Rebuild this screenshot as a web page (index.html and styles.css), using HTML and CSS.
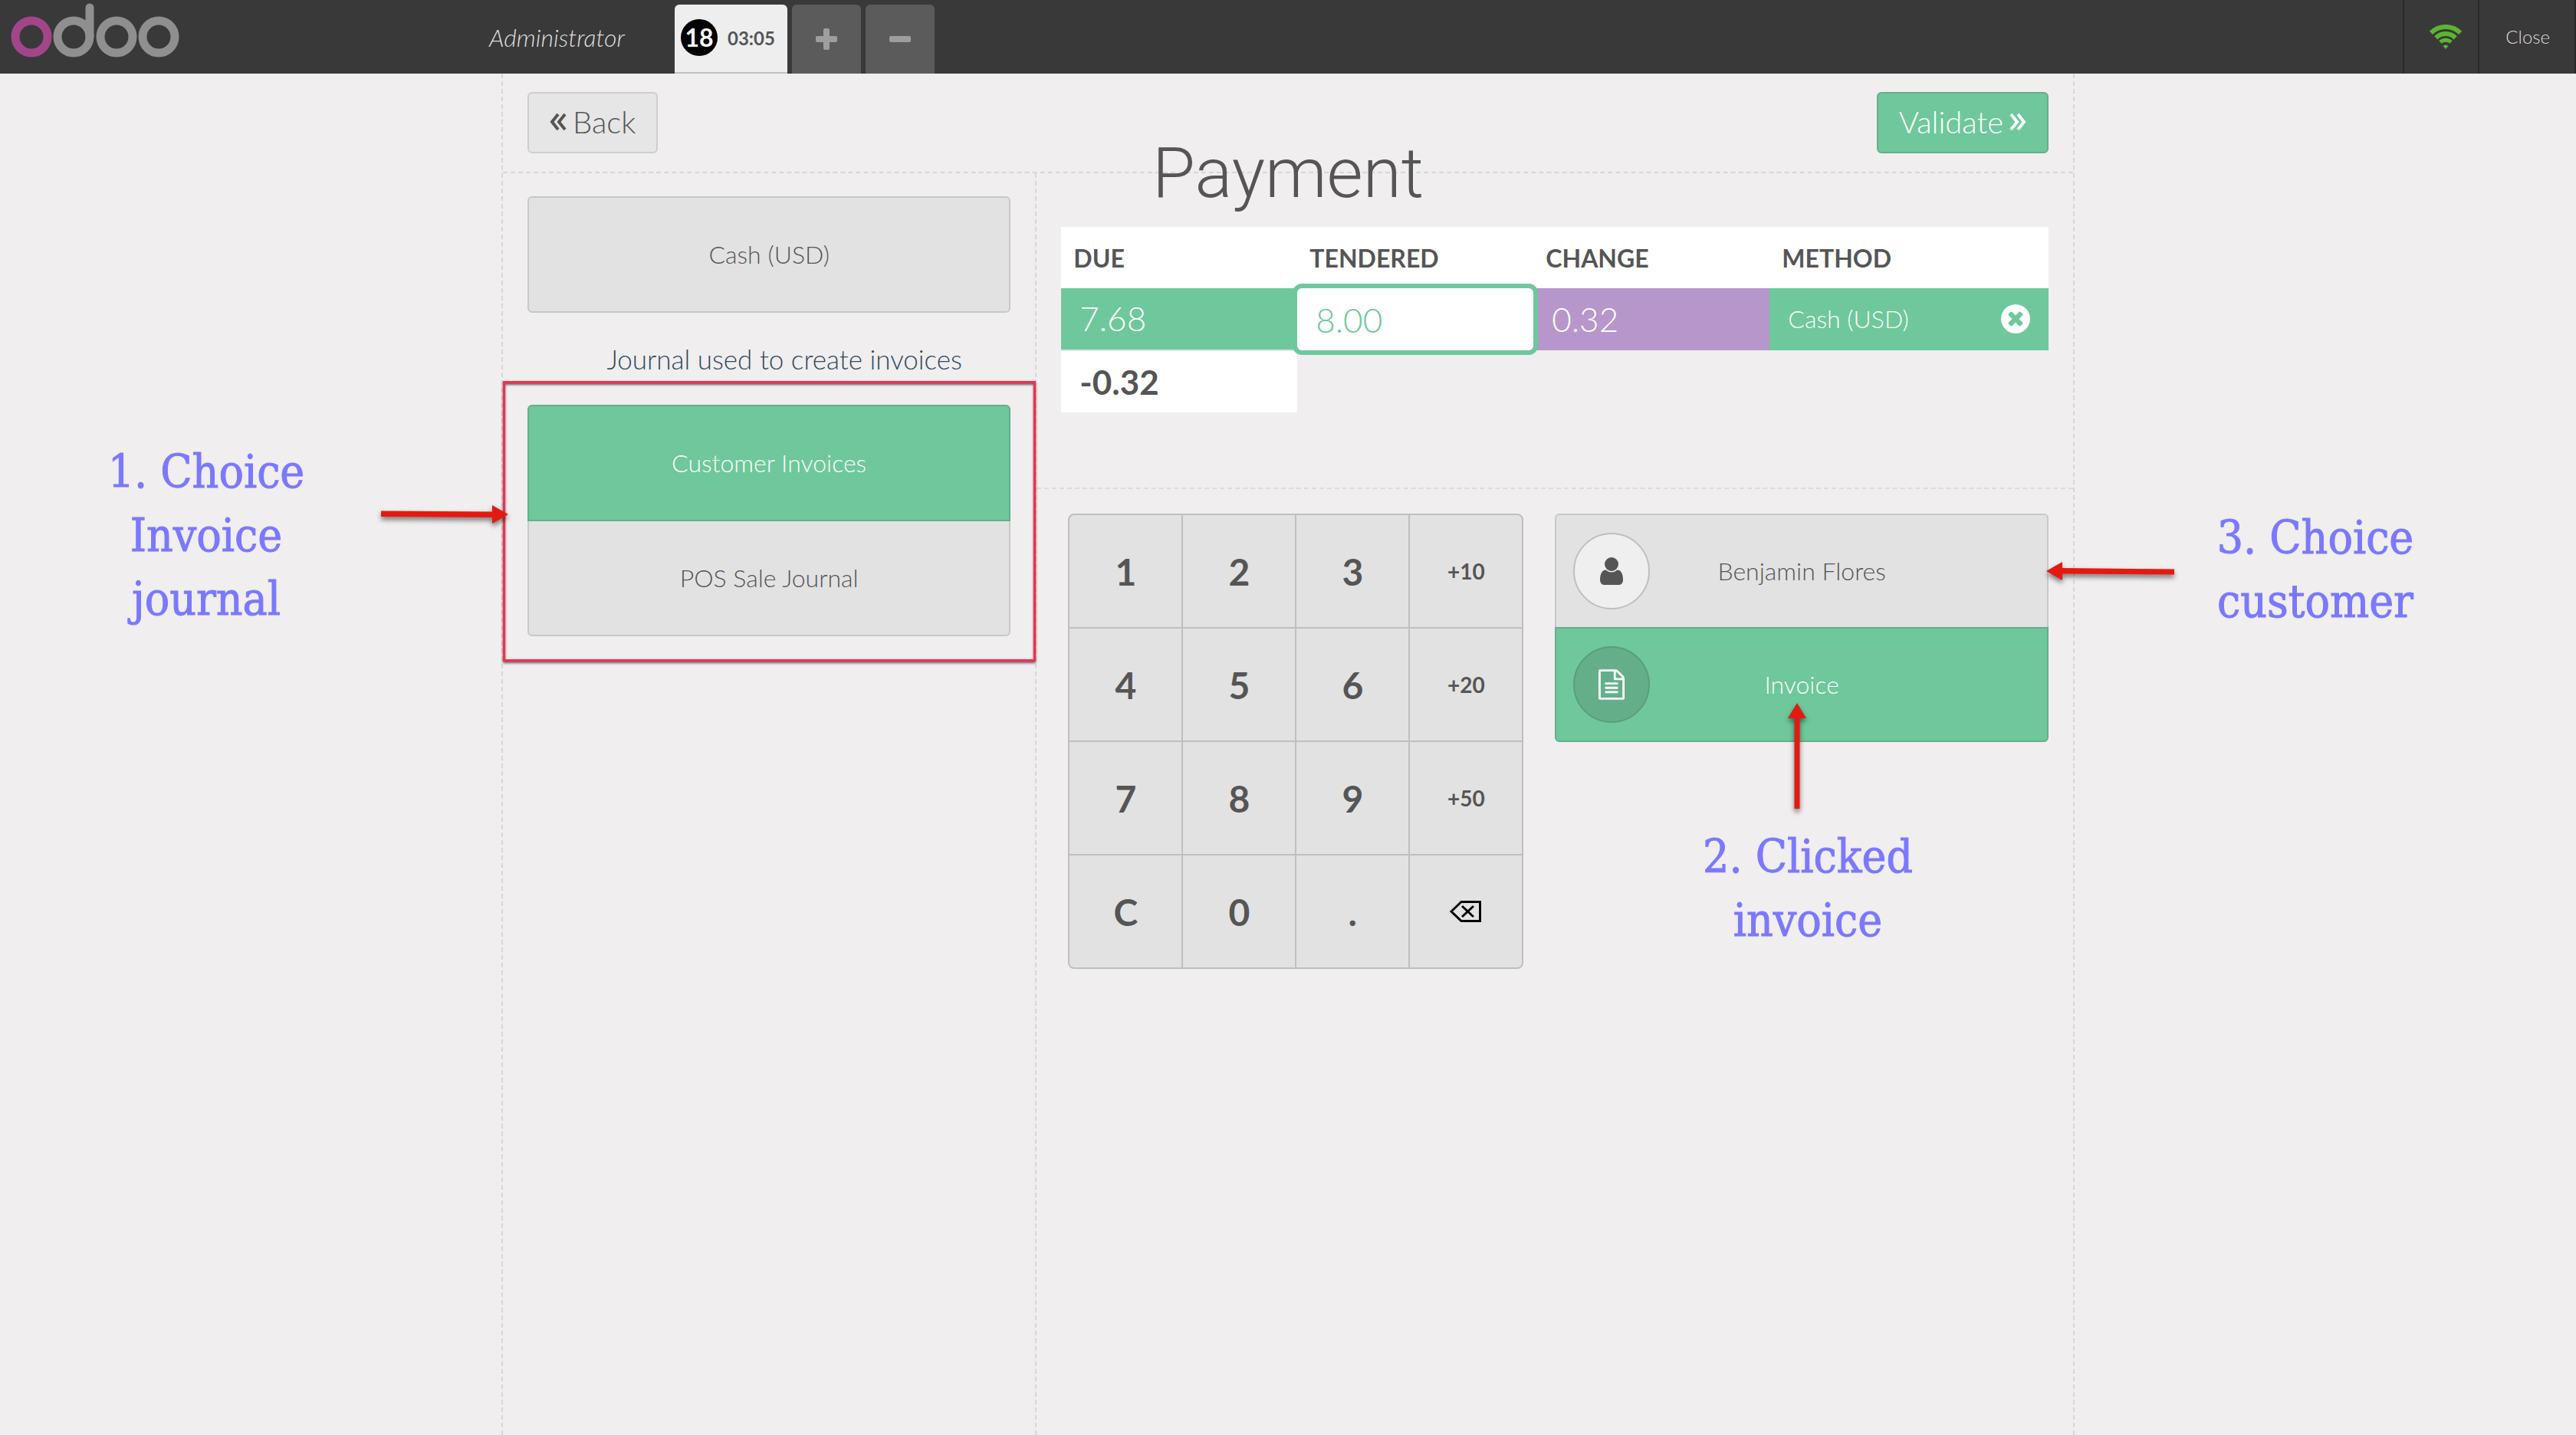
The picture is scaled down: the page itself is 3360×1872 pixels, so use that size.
FILE: index.html
```html
<!DOCTYPE html>
<html lang="en">
<head>
<meta charset="utf-8">
<meta name="viewport" content="width=device-width, initial-scale=1">
<title>Point of Sale - Payment</title>
<link rel="stylesheet" href="styles.css">
</head>
<body>
<header class="topbar">
  <div class="branding">
    <svg class="logo" viewBox="0 0 220 72" role="img" aria-label="odoo">
      <g fill="none" stroke-width="11">
        <circle cx="27" cy="44" r="21" stroke="#a24689"/>
        <g stroke="#8f8f8f">
          <circle cx="82" cy="44" r="21"/>
          <path d="M103 44V6" stroke-linecap="round"/>
          <circle cx="138" cy="44" r="21"/>
          <circle cx="193" cy="44" r="21"/>
        </g>
      </g>
    </svg>
    <span class="username">Administrator</span>
  </div>
  <nav class="orders">
    <button type="button" class="order selected"><span class="sequence">18</span><span class="time">03:05</span></button>
    <button type="button" class="order square" aria-label="New order">
      <svg viewBox="0 0 28 28" width="28" height="28"><rect x="10" width="8" height="28" rx="2"/><rect y="10" width="28" height="8" rx="2"/></svg>
    </button>
    <button type="button" class="order square" aria-label="Delete order">
      <svg viewBox="0 0 28 28" width="28" height="28"><rect y="10" width="28" height="8" rx="2"/></svg>
    </button>
  </nav>
  <div class="status">
    <div class="status-item wifi">
      <svg viewBox="0 0 44 32" width="44" height="32" role="img" aria-label="Connected">
        <g fill="none" stroke="#5cb531" stroke-width="6">
          <path d="M2.9 10.9A27 27 0 0 1 41.1 10.9"/>
          <path d="M9.3 17.3A18 18 0 0 1 34.7 17.3"/>
          <path d="M15 23A10 10 0 0 1 29 23" stroke-width="5"/>
        </g>
        <path d="M18.500 28Q22 25 25.500 28L22 32Z" fill="#5cb531"/>
      </svg>
    </div>
    <button type="button" class="status-item close">Close</button>
  </div>
</header>

<main class="screen">
  <div class="top-content">
    <button type="button" class="nav-button">
      <svg viewBox="0 0 22 24" width="22" height="24"><path d="M11 2L3 12L11 22M20 2L12 12L20 22"/></svg>
      Back
    </button>
    <h1 class="title">Payment</h1>
    <button type="button" class="nav-button highlight">
      Validate
      <svg viewBox="0 0 22 24" width="22" height="24"><path d="M2 2L10 12L2 22M11 2L19 12L11 22"/></svg>
    </button>
  </div>

  <div class="columns">
    <section class="left-content">
      <div class="button-group">
        <button type="button" class="choice">Cash (USD)</button>
      </div>
      <p class="journal-caption">Journal used to create invoices</p>
      <div class="button-group journals">
        <button type="button" class="choice highlight">Customer Invoices</button>
        <button type="button" class="choice">POS Sale Journal</button>
        <div class="frame"></div>
      </div>
    </section>

    <section class="right-content">
      <div class="paymentlines-container">
        <table class="paymentlines">
          <thead>
            <tr><th>DUE</th><th>TENDERED</th><th>CHANGE</th><th>METHOD</th></tr>
          </thead>
          <tbody>
            <tr class="line">
              <td class="due">7.68</td>
              <td class="tendered"><input type="text" value="8.00" aria-label="Tendered"></td>
              <td class="change">0.32</td>
              <td class="method">
                <div class="method-row">
                  <span>Cash (USD)</span>
                  <button type="button" class="delete" aria-label="Remove payment line">
                    <svg viewBox="128 128 1536 1536" width="38" height="38"><path d="M1277 1122q0-26-19-45l-181-181 181-181q19-19 19-45 0-27-19-46l-90-90q-19-19-46-19-26 0-45 19l-181 181-181-181q-19-19-45-19-27 0-46 19l-90 90q-19 19-19 46 0 26 19 45l181 181-181 181q-19 19-19 45 0 27 19 46l90 90q19 19 46 19 26 0 45-19l181-181 181 181q19 19 45 19 27 0 46-19l90-90q19-19 19-46zm387-226q0 209-103 385.500t-279.500 279.500-385.500 103-385.500-103-279.500-279.500-103-385.500 103-385.500 279.500-279.500 385.500-103 385.500 103 279.500 279.500 103 385.500z"/></svg>
                  </button>
                </div>
              </td>
            </tr>
            <tr class="remaining"><td>-0.32</td></tr>
          </tbody>
        </table>
      </div>

      <div class="bottom-content">
        <div class="numpad">
          <button type="button">1</button><button type="button">2</button><button type="button">3</button><button type="button" class="mode">+10</button>
          <button type="button">4</button><button type="button">5</button><button type="button">6</button><button type="button" class="mode">+20</button>
          <button type="button">7</button><button type="button">8</button><button type="button">9</button><button type="button" class="mode">+50</button>
          <button type="button">C</button><button type="button">0</button><button type="button">.</button>
          <button type="button" aria-label="Backspace">
            <svg viewBox="0 0 42 28" width="42" height="28" fill="none" stroke="#000"><path d="M2 14L15 1.500H39.500V26.500H15Z" stroke-width="3"/><path d="M16 7L31 21M31 7L16 21" stroke-width="3"/></svg>
          </button>
        </div>
        <div class="button-group payment-buttons">
          <button type="button" class="option">
            <span class="icon"><svg viewBox="0 128 1280 1536" width="30" height="36"><path d="M1280 1399q0 109-62.500 187t-150.500 78h-854q-88 0-150.500-78t-62.500-187q0-85 8.500-160.500t31.500-152 58.500-131 94-89 134.500-34.500q131 128 313 128t313-128q76 0 134.500 34.500t94 89 58.500 131 31.500 152 8.500 160.500zm-256-887q0 159-112.500 271.500t-271.500 112.500-271.500-112.500-112.500-271.500 112.500-271.500 271.500-112.500 271.500 112.500 112.500 271.500z"/></svg></span>
            Benjamin Flores
          </button>
          <button type="button" class="option highlight">
            <span class="icon"><svg viewBox="128 0 1536 1792" width="34" height="40"><path d="M1596 380q28 28 48 76t20 88v1152q0 40-28 68t-68 28h-1344q-40 0-68-28t-28-68v-1600q0-40 28-68t68-28h896q40 0 88 20t76 48zm-444-244v376h376q-10-29-22-41l-313-313q-12-12-41-22zm384 1528v-1024h-416q-40 0-68-28t-28-68v-416h-768v1536h1280zm-1024-864q0-14 9-23t23-9h704q14 0 23 9t9 23v64q0 14-9 23t-23 9h-704q-14 0-23-9t-9-23v-64zm736 224q14 0 23 9t9 23v64q0 14-9 23t-23 9h-704q-14 0-23-9t-9-23v-64q0-14 9-23t23-9h704zm0 256q14 0 23 9t9 23v64q0 14-9 23t-23 9h-704q-14 0-23-9t-9-23v-64q0-14 9-23t23-9h704z"/></svg></span>
            Invoice
          </button>
        </div>
      </div>
    </section>
  </div>

  <!-- Walkthrough callouts laid over the screen -->
  <p class="note note-journal">1. Choice<br>Invoice<br>journal</p>
  <p class="note note-invoice">2. Clicked<br>invoice</p>
  <p class="note note-customer">3. Choice<br>customer</p>
  <svg class="arrow arrow-journal" viewBox="0 0 166 24" width="166" height="24"><path d="M0 7.500L145 8.500V0L166 12L145 24V16L0 15Z"/></svg>
  <svg class="arrow arrow-invoice" viewBox="0 0 24 138" width="24" height="138"><path d="M12 0L24 20H15.500V138H8.500V20H0Z"/></svg>
  <svg class="arrow arrow-customer" viewBox="0 0 167 24" width="167" height="24"><path d="M0 12L21 0V8L167 9.500V16.500L21 15.500V24Z"/></svg>
</main>
</body>
</html>
```
FILE: styles.css
```css
* {
  box-sizing: border-box;
}

body {
  margin: 0;
  background: #f0eeee;
  color: #555;
  font-family: Lato, "Liberation Sans", sans-serif;
  font-size: 32px;
  font-weight: 300;
  overflow-x: hidden;
}

button,
input {
  margin: 0;
  padding: 0;
  border: 0;
  background: none;
  color: inherit;
  font: inherit;
}

button {
  cursor: pointer;
}

svg {
  display: block;
}

/* Top bar */
.topbar {
  display: flex;
  height: 96px;
  background: #393939;
}

.branding {
  display: flex;
  flex: 0 0 880px;
  align-items: center;
  justify-content: space-between;
  padding: 0 65px 0 14px;
}

.logo {
  width: 220px;
  height: 72px;
  margin: 0 0 17px;
}

.username {
  color: #ddd;
  font-style: italic;
}

.orders {
  display: flex;
  align-items: flex-end;
  gap: 6px;
}

.order {
  display: flex;
  align-items: center;
  justify-content: center;
  height: 90px;
  border-radius: 6px 6px 0 0;
  background: #5b5b5b;
  fill: #9e9e9e;
}

.order.selected {
  gap: 13px;
  padding: 0 16px 2px 8px;
  border-bottom: 2px solid #c1c1c1;
  background: #eee;
  font-weight: 700;
}

.square {
  width: 90px;
}

.sequence {
  width: 48px;
  border-radius: 24px;
  background: #000;
  color: #fff;
  line-height: 48px;
}

.time {
  font-size: 24px;
}

.status {
  display: flex;
  margin-left: auto;
  border-right: 2px solid #292929;
}

.status-item {
  display: flex;
  align-items: center;
  border-left: 2px solid #292929;
}

.wifi {
  padding: 0 20px 0 32px;
}

.close {
  padding: 0 32px 2px 34px;
  color: #ddd;
  font-size: 24px;
}

/* Payment screen */
.screen {
  position: relative;
  max-width: 2052px;
  min-height: calc(100vh - 96px);
  margin: 0 auto;
  border: dashed #d7d7d7;
  border-width: 0 2px;
  display: flex;
  flex-direction: column;
}

.top-content {
  position: relative;
  display: flex;
  justify-content: space-between;
  padding: 24px 32px;
  border-bottom: 2px dashed #d7d7d7;
}

.title {
  position: absolute;
  top: 76px;
  left: 0;
  right: 0;
  margin: 0;
  font: 300 91px/108px Roboto, sans-serif;
  text-align: center;
  pointer-events: none;
}

.nav-button {
  display: flex;
  align-items: center;
  gap: 8px;
  height: 80px;
  padding: 0 27px 2px;
  border: 2px solid #cecece;
  border-radius: 6px;
  background: #e6e6e6;
  font-size: 40px;
}

.nav-button svg {
  fill: none;
  stroke: currentColor;
  stroke-width: 4;
}

.columns {
  display: flex;
  flex: 1;
}

.left-content {
  flex: 0 0 34%;
  padding: 30px 32px;
  border-right: 2px dashed #d7d7d7;
}

.button-group {
  position: relative;
  display: flex;
  flex-direction: column;
}

.choice,
.option {
  height: 152px;
  padding-bottom: 2px;
  border: 2px solid #c8c8c8;
  background: #e2e2e2;
}

.choice + .choice,
.option + .option {
  margin-top: -2px;
}

.button-group > button:first-child {
  border-top-left-radius: 6px;
  border-top-right-radius: 6px;
}

.button-group > button:last-of-type {
  border-bottom-left-radius: 6px;
  border-bottom-right-radius: 6px;
}

.highlight {
  position: relative;
  border-color: #64af8a;
  background: #6ec89b;
  color: #fff;
}

.journal-caption {
  margin: 36px 0;
  padding-left: 40px;
  color: #34495e;
  font-size: 35px;
  line-height: 48px;
  text-align: center;
}

.frame {
  position: absolute;
  inset: -31px -33px -33px -32px;
  border: 3px solid #ff2a4f;
  box-shadow: 0 2px 3px rgba(0, 0, 0, 0.6), inset 0 2px 3px rgba(0, 0, 0, 0.6);
  pointer-events: none;
}

.right-content {
  flex: 1;
}

.paymentlines-container {
  min-height: 412px;
  padding: 70px 32px 0;
  border-bottom: 2px dashed #dcdcdc;
}

.paymentlines {
  width: 100%;
  border-collapse: collapse;
  table-layout: fixed;
}

.paymentlines th {
  width: 308px;
  height: 80px;
  padding: 0 16px;
  background: #fff;
  font-weight: 700;
  text-align: left;
}

.paymentlines th:last-child {
  width: auto;
}

.paymentlines td {
  height: 81px;
  padding: 0 24px 2px;
  font-size: 44px;
}

.paymentlines .line td {
  background: #6ec89b;
  color: #fff;
}

.paymentlines .line .tendered {
  padding: 0;
}

.tendered input {
  display: block;
  width: 100%;
  height: 81px;
  padding: 0 24px;
  border-radius: 6px;
  background: #fff;
  box-shadow: 0 0 0 6px #6ec89b;
  color: #6ec89b;
  outline: none;
  position: relative;
}

.paymentlines .line .change {
  background: #b796cc;
}

.paymentlines .line .method {
  font-size: 32px;
}

.method-row {
  display: flex;
  align-items: center;
  justify-content: space-between;
}

.delete {
  fill: #fff;
}

.paymentlines .remaining td {
  padding-bottom: 0;
  border-top: 2px solid #e2e2e2;
  background: #fff;
  font-weight: 700;
}

.bottom-content {
  display: flex;
  align-items: flex-start;
  gap: 41px;
  padding: 32px 32px 32px 41px;
}

.numpad {
  display: grid;
  grid-template-columns: repeat(4, 146px);
  grid-auto-rows: 146px;
  gap: 2px;
  border: 2px solid #bfbfbf;
  border-radius: 8px;
  background: #bfbfbf;
  overflow: hidden;
}

.numpad button {
  display: flex;
  align-items: center;
  justify-content: center;
  background: #e2e2e2;
  font-size: 48px;
  font-weight: 700;
}

.numpad .mode {
  font-size: 28px;
}

.payment-buttons {
  flex: 1;
}

.option {
  position: relative;
  height: 150px;
}

.icon {
  position: absolute;
  top: 23px;
  left: 22px;
  display: flex;
  align-items: center;
  justify-content: center;
  width: 100px;
  height: 100px;
  border: 2px solid #bfbfbf;
  border-radius: 50%;
  background: #efefef;
  fill: currentColor;
}

.highlight .icon {
  border-color: #5a9e7c;
  background: #64af8a;
}

/* Callouts */
.note {
  position: absolute;
  width: 300px;
  margin: 0;
  color: #7b78ff;
  font: 400 60px/83px "American Typewriter", "DejaVu Serif Condensed", "DejaVu Serif", serif;
  -webkit-text-stroke: 1px #7b78ff;
  text-align: center;
  white-space: nowrap;
}

.note-journal {
  top: 478px;
  left: -537px;
}

.note-invoice {
  top: 980px;
  left: 1552px;
}

.note-customer {
  top: 564px;
  left: 2214px;
}

.arrow {
  position: absolute;
  overflow: visible;
  fill: #e31a12;
  filter: drop-shadow(0 4px 3px rgba(0, 0, 0, 0.5));
  pointer-events: none;
}

.arrow-journal {
  top: 563px;
  left: -159px;
}

.arrow-invoice {
  top: 821px;
  left: 1676px;
}

.arrow-customer {
  top: 637px;
  left: 2013px;
}
```
